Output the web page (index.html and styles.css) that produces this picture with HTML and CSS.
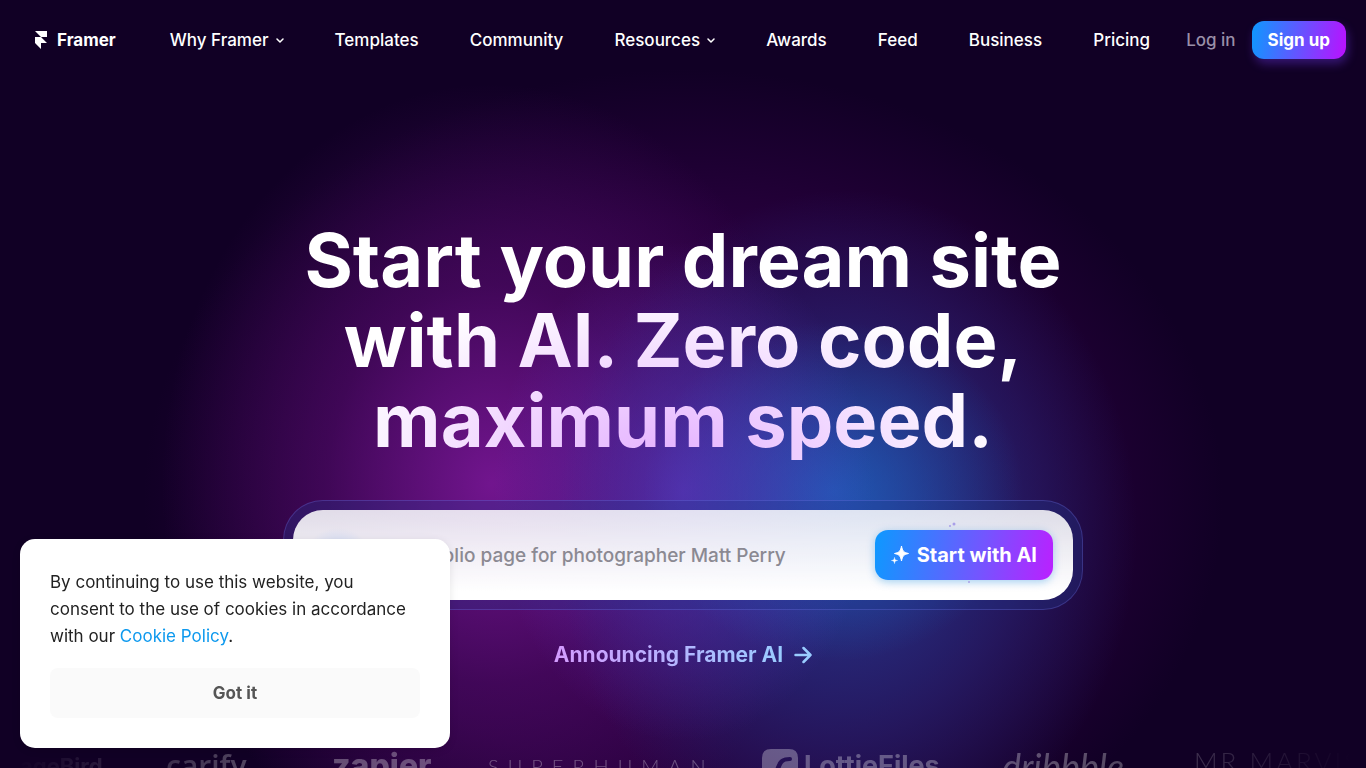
FILE: index.html
```html
<!DOCTYPE html>
<html lang="en">
<head>
<meta charset="utf-8">
<meta name="viewport" content="width=device-width, initial-scale=1">
<title>Framer</title>
<link rel="stylesheet" href="styles.css">
</head>
<body>
<div class="page">
  <header class="header">
    <a class="brand" href="#">
      <svg class="brand-mark" viewBox="0 0 12 18" aria-hidden="true"><path d="M0 0h12v6H6zM0 6h6l6 6H6v6l-6-6z"/></svg>
      <span>Framer</span>
    </a>
    <nav class="nav">
      <a href="#">Why Framer<svg class="chevron" viewBox="0 0 8 6" aria-hidden="true"><path d="M1 1l3 3 3-3"/></svg></a>
      <a href="#">Templates</a>
      <a href="#">Community</a>
      <a href="#">Resources<svg class="chevron" viewBox="0 0 8 6" aria-hidden="true"><path d="M1 1l3 3 3-3"/></svg></a>
      <a href="#">Awards</a>
      <a href="#">Feed</a>
      <a href="#">Business</a>
      <a href="#">Pricing</a>
    </nav>
    <div class="account">
      <a class="login" href="#">Log in</a>
      <a class="signup" href="#">Sign up</a>
    </div>
  </header>

  <main class="hero">
    <h1 class="title">Start your dream site<br>with AI. Zero code,<br>maximum speed.</h1>
    <form class="prompt">
      <div class="prompt-box">
        <input class="prompt-input" type="text" aria-label="Describe your site" placeholder="Portfolio page for photographer Matt Perry">
        <button class="start" type="button">
          <svg class="sparkle" viewBox="0 0 18 20" aria-hidden="true"><path d="M10.500 1C11.500 6 12.500 7.300 17.500 8.500C12.500 9.700 11.500 11 10.500 16C9.500 11 8.500 9.700 3.500 8.500C8.500 7.300 9.500 6 10.500 1z" stroke="#fff" stroke-linejoin="round"/><path d="M3.500 12.500C3.800 14.800 4.200 15.200 6.500 15.500C4.200 15.800 3.800 16.200 3.500 18.500C3.200 16.200 2.800 15.800.500 15.500C2.800 15.200 3.200 14.800 3.500 12.500z" stroke="#fff" stroke-width=".5" stroke-linejoin="round"/></svg>
          <span>Start with AI</span>
        </button>
      </div>
      <svg class="dust" viewBox="0 0 30 66" aria-hidden="true"><circle cx="3" cy="5" r="1"/><circle cx="7" cy="3" r="1.500"/><circle cx="22" cy="61" r="1"/></svg>
    </form>
    <a class="announce" href="#">
      <span>Announcing Framer AI</span>
      <svg class="arrow" viewBox="0 0 18 18" aria-hidden="true"><path d="M1.500 9h15M9.500 2l7 7-7 7"/></svg>
    </a>
  </main>

  <div class="logos">
    <span class="logo bird">ageBird</span>
    <span class="logo carify">carify</span>
    <span class="logo zapier">zapier</span>
    <span class="logo superhuman">SUPERHUMAN</span>
    <span class="logo lottie">
      <svg class="lottie-mark" viewBox="0 0 36 36" aria-hidden="true"><path fill-rule="evenodd" d="M9 0h18q9 0 9 9v18q0 9-9 9H9q-9 0-9-9V9q0-9 9-9zM28 8c-10 0-12 5-14 10s-3 6-6 6a2 2 0 0 0 0 4c7 0 9-5 11-10s4-6 9-6a2 2 0 0 0 0-4z"/></svg>
      <span>LottieFiles</span>
    </span>
    <span class="logo dribbble">dribbble</span>
    <span class="logo marvis">MR MARVIS</span>
  </div>
</div>

<aside class="cookie" aria-label="Cookie notice">
  <p>By continuing to use this website, you consent to the use of cookies in accordance with our <a href="#">Cookie Policy</a>.</p>
  <button type="button">Got it</button>
</aside>
</body>
</html>
```

FILE: styles.css
```css
* {
  box-sizing: border-box;
}

body {
  margin: 0;
  background: #110025;
  color: #fff;
  font-family: Inter, "Liberation Sans", sans-serif;
}

a {
  color: inherit;
  text-decoration: none;
}

button,
input {
  font: inherit;
}

.page {
  display: flex;
  flex-direction: column;
  height: 100vh;
  overflow: hidden;
  background:
    radial-gradient(ellipse 190px 250px at 50% 64%, rgba(100, 58, 205, 0.600), transparent),
    radial-gradient(ellipse 190px 170px at 61% 64%, rgba(28, 105, 200, 0.650), transparent),
    radial-gradient(ellipse 290px 340px at 62% 69%, rgba(38, 62, 150, 0.900), rgba(36, 44, 125, 0.650) 50%, transparent),
    radial-gradient(ellipse 330px 400px at 36% 63%, rgba(125, 25, 155, 0.850), rgba(90, 14, 115, 0.500) 50%, transparent),
    radial-gradient(ellipse 540px 430px at 50% 65%, rgba(60, 0, 85, 0.900), rgba(46, 0, 68, 0.700) 65%, transparent),
    #110025;
}

.header {
  display: flex;
  flex: none;
  align-items: center;
  height: 80px;
  padding: 0 20px 0 35px;
  font-size: 17px;
  font-weight: 500;
  line-height: 24px;
}

.brand {
  display: flex;
  align-items: center;
  gap: 10px;
  font-weight: 700;
}

.brand-mark {
  width: 12px;
  height: 18px;
  fill: #fff;
}

.nav {
  display: flex;
  flex: 1;
  justify-content: space-between;
  padding: 0 36px 0 54px;
}

.nav a {
  white-space: nowrap;
}

.chevron {
  width: 8px;
  height: 6px;
  margin-left: 7px;
  vertical-align: 2px;
  fill: none;
  stroke: #fff;
  stroke-width: 1.500;
  stroke-linecap: round;
  stroke-linejoin: round;
}

.account {
  display: flex;
  align-items: center;
  gap: 16px;
}

.login {
  color: #9a8fa8;
}

.signup {
  padding: 7px 16px;
  border-radius: 12px;
  background: linear-gradient(100deg, #0d99ff, #bb10ff);
  box-shadow: 2px 5px 10px rgba(120, 60, 255, 0.350);
  font-weight: 700;
}

.hero {
  display: flex;
  flex: none;
  flex-direction: column;
  align-items: center;
  padding-top: 140px;
}

.title {
  margin: 0 0 40px;
  background: radial-gradient(ellipse 350px 180px at 48% 100%, #e4b0ff, #fff);
  background-clip: text;
  color: transparent;
  font-size: 74px;
  font-weight: 700;
  line-height: 80px;
  text-align: center;
}

.prompt {
  position: relative;
  width: 100%;
  max-width: 800px;
  padding: 9px;
  border: 1px solid rgba(130, 130, 255, 0.250);
  border-radius: 40px;
  background: rgba(36, 60, 150, 0.300);
}

.prompt-box {
  display: flex;
  align-items: center;
  padding: 20px;
  border-radius: 30px;
  background:
    radial-gradient(ellipse 30px 22px at 45px 40px, rgba(80, 150, 255, 0.200), transparent),
    linear-gradient(rgba(255, 255, 255, 0.850), #fff 90%);
}

.prompt-input {
  flex: 1;
  min-width: 0;
  height: 50px;
  padding: 0 0 0 86px;
  border: 0;
  outline: 0;
  background: none;
  font-size: 19px;
  font-weight: 500;
}

.prompt-input::placeholder {
  color: #8b8992;
  opacity: 1;
}

.start {
  display: flex;
  align-items: center;
  gap: 8px;
  height: 50px;
  padding: 0 16px;
  border: 0;
  border-radius: 13px;
  background: linear-gradient(100deg, #0d99ff, #7455ff 60%, #bb20ff);
  box-shadow: 0 2px 8px rgba(0, 130, 220, 0.350);
  color: #fff;
  font-size: 20px;
  font-weight: 700;
  white-space: nowrap;
}

.sparkle {
  width: 18px;
  height: 20px;
  fill: #fff;
}

.dust {
  position: absolute;
  top: 20px;
  right: 105px;
  width: 30px;
  height: 66px;
  fill: #a99fe8;
}

.announce {
  display: flex;
  align-items: center;
  gap: 11px;
  margin-top: 30px;
  font-size: 21px;
  font-weight: 700;
  line-height: 30px;
}

.announce span {
  background: linear-gradient(90deg, #d49bff, #99ccff);
  background-clip: text;
  color: transparent;
}

.arrow {
  width: 18px;
  height: 18px;
  fill: none;
  stroke: #99ccff;
  stroke-width: 2.500;
  stroke-linecap: round;
  stroke-linejoin: round;
}

.logos {
  display: flex;
  flex: none;
  gap: 60px;
  margin-top: 79px;
  padding-left: 20px;
  opacity: 0.300;
  line-height: 34px;
  white-space: nowrap;
  mask-image: linear-gradient(90deg, transparent 1%, #000 20%, #000 80%, transparent 99%);
}

.logo {
  flex: none;
}

.bird {
  width: 86px;
  font-size: 22px;
  font-weight: 700;
}

.carify {
  width: 106px;
  font-family: "Open Sans", sans-serif;
  font-size: 30px;
  font-weight: 600;
}

.zapier {
  width: 96px;
  font-size: 32px;
  font-weight: 800;
}

.superhuman {
  width: 214px;
  font-family: Lato, sans-serif;
  font-size: 20px;
  font-weight: 300;
  letter-spacing: 9px;
}

.lottie {
  display: flex;
  gap: 6px;
  width: 180px;
  font-size: 27px;
  font-weight: 700;
}

.lottie-mark {
  width: 36px;
  height: 36px;
  fill: #fff;
}

.dribbble {
  width: 132px;
  font-family: Lato, sans-serif;
  font-size: 36px;
  font-style: italic;
}

.marvis {
  font-family: Lato, sans-serif;
  font-size: 26px;
  font-weight: 300;
  letter-spacing: 3px;
  line-height: 24px;
}

.cookie {
  position: fixed;
  bottom: 20px;
  left: 20px;
  width: 430px;
  padding: 30px;
  border-radius: 15px;
  background: #fff;
  box-shadow: 0 2px 8px rgba(0, 0, 0, 0.100);
  color: #222;
  font-size: 17px;
  line-height: 27px;
}

.cookie p {
  margin: 0 0 18px;
}

.cookie a {
  color: #0d99ee;
}

.cookie button {
  width: 100%;
  height: 50px;
  border: 0;
  border-radius: 8px;
  background: #fafafa;
  color: #555;
  font-weight: 700;
}
```
